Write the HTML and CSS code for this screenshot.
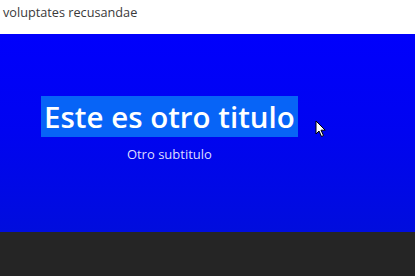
FILE: index.html
```html
<!DOCTYPE html>
<html lang="es">
<head>
<meta charset="utf-8">
<title>Titulo</title>
<link rel="stylesheet" href="styles.css">
</head>
<body>
<section class="intro">
  <p class="intro-text">voluptates recusandae</p>
</section>
<header class="hero">
  <div class="hero-inner">
    <h1 class="hero-title">Este es otro titulo</h1>
    <p class="hero-subtitle">Otro subtitulo</p>
  </div>
  <svg class="cursor" width="12" height="18" viewBox="0 0 12 18" aria-hidden="true">
    <path d="M1 1 L1 14 L4 11 L6.5 16.5 L8.5 15.5 L6 10.2 L10.2 10.2 Z" fill="#ffffff" stroke="#000000" stroke-width="1" stroke-linejoin="round"/>
  </svg>
</header>
<footer class="bottom"></footer>
</body>
</html>
```
FILE: styles.css
```css
html, body {
  margin: 0;
  padding: 0;
  height: 100%;
}
body {
  display: flex;
  flex-direction: column;
  font-family: "Open Sans", "Noto Sans", "Liberation Sans", sans-serif;
  background: #252525;
}
.intro {
  background: #ffffff;
  height: 34px;
  padding: 0 0 0 3px;
  box-sizing: border-box;
}
.intro-text {
  margin: 0;
  font-size: 12.7px;
  line-height: 22px;
  padding-top: 1px;
  color: #3a3a3a;
}
.hero {
  position: relative;
  height: 198px;
  box-sizing: border-box;
  padding: 62px 0 0 41px;
  background: linear-gradient(to bottom, #0000fc 0%, #0004f0 50%, #000ddd 100%);
}
.hero-inner {
  display: inline-flex;
  flex-direction: column;
  align-items: center;
}
.hero-title {
  margin: 0;
  padding: 0 3px;
  font-size: 29.5px;
  font-weight: 600;
  line-height: 41px;
  color: #ffffff;
  background: #0764f7;
}
.hero-subtitle {
  margin: 8px 0 0;
  font-size: 13px;
  line-height: 18px;
  color: #dedcff;
}
.cursor {
  position: absolute;
  left: 315px;
  top: 86px;
}
.bottom {
  flex: 1;
  background: #252525;
}
```
